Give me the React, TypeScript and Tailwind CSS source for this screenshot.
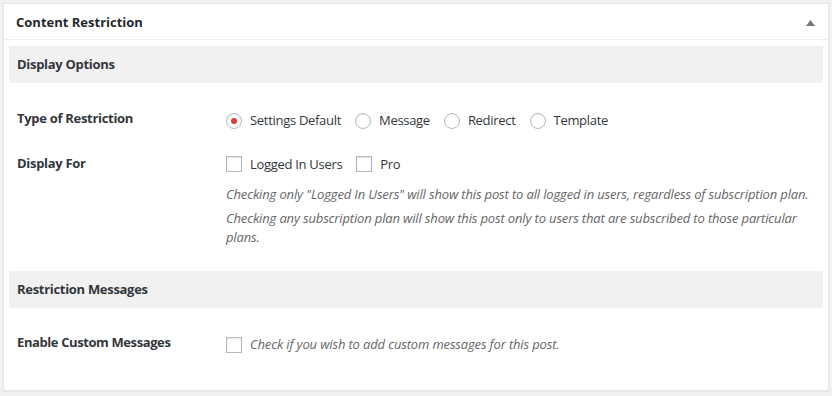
const font = { fontFamily: '"Open Sans", "Noto Sans", sans-serif' };

function Radio({ label, checked }: { label: string; checked?: boolean }) {
  return (
    <label className="flex items-center gap-[8px]">
      <span className="w-4 h-4 rounded-full border border-[#b4b9be] bg-white shadow-[inset_0_1px_2px_rgba(0,0,0,0.07)] flex items-center justify-center">
        {checked && <span className="w-[6px] h-[6px] rounded-full bg-[#dd3d36]" />}
      </span>
      <span className="text-[13px] text-[#32373c] tracking-[-0.3px]">{label}</span>
    </label>
  );
}

function Checkbox({ label }: { label?: string }) {
  return (
    <label className="flex items-center gap-[8px]">
      <span className="w-4 h-4 border border-[#b4b9be] bg-white shadow-[inset_0_1px_2px_rgba(0,0,0,0.1)]" />
      {label && <span className="text-[13px] text-[#32373c] tracking-[-0.3px]">{label}</span>}
    </label>
  );
}

function Band({ title }: { title: string }) {
  return (
    <div className="h-[37px] bg-[#f1f1f1] px-[8px] flex items-center">
      <h3 className="text-[13px] font-bold text-[#32373c] tracking-[-0.3px]">{title}</h3>
    </div>
  );
}

export default function App() {
  return (
    <div className="w-[832px] h-[396px] bg-[#f1f1f1] pt-[3px] pl-[3px] pr-[3px] overflow-hidden" style={font}>
      <div className="bg-white border border-[#e5e5e5] shadow-[0_1px_1px_rgba(0,0,0,0.04)] h-[388px]">
        <div className="h-[36px] px-[12px] flex items-center justify-between border-b border-[#eee]">
          <h2 className="text-[13px] font-bold text-[#23282d] pt-[2px]">Content Restriction</h2>
          <svg width="9" height="6" viewBox="0 0 9 6" className="mr-[1px] mt-[2px]">
            <path d="M4.5 0 L9 6 L0 6 Z" fill="#72777c" />
          </svg>
        </div>
        <div className="px-[5px] pt-[6px]">
          <Band title="Display Options" />
          <div className="flex pt-[26px]">
            <div className="w-[217px] pl-[8px] text-[13px] font-bold text-[#32373c] tracking-[-0.3px]">Type of Restriction</div>
            <div className="flex gap-[14px] pt-[2px]">
              <Radio label="Settings Default" checked />
              <Radio label="Message" />
              <Radio label="Redirect" />
              <Radio label="Template" />
            </div>
          </div>
          <div className="flex pt-[23px]">
            <div className="w-[217px] pl-[8px] text-[13px] font-bold text-[#32373c] tracking-[-0.3px]">Display For</div>
            <div className="flex-1">
              <div className="flex gap-[14px] pt-[1px]">
                <Checkbox label="Logged In Users" />
                <Checkbox label="Pro" />
              </div>
              <p className="mt-[11px] text-[13px] italic text-[#666] leading-[19px] tracking-[-0.15px]">
                Checking only "Logged In Users" will show this post to all logged in users, regardless of subscription plan.
              </p>
              <p className="mt-[5px] text-[13px] italic text-[#666] leading-[19px] tracking-[-0.15px] w-[590px]">
                Checking any subscription plan will show this post only to users that are subscribed to those particular plans.
              </p>
            </div>
          </div>
          <div className="pt-[24px]">
            <Band title="Restriction Messages" />
          </div>
          <div className="flex pt-[25px]">
            <div className="w-[217px] pl-[8px] text-[13px] font-bold text-[#32373c] tracking-[-0.4px]">Enable Custom Messages</div>
            <div className="flex items-center gap-[8px] pt-[2px]">
              <Checkbox />
              <span className="text-[13px] italic text-[#666] tracking-[-0.15px]">Check if you wish to add custom messages for this post.</span>
            </div>
          </div>
        </div>
      </div>
    </div>
  );
}
